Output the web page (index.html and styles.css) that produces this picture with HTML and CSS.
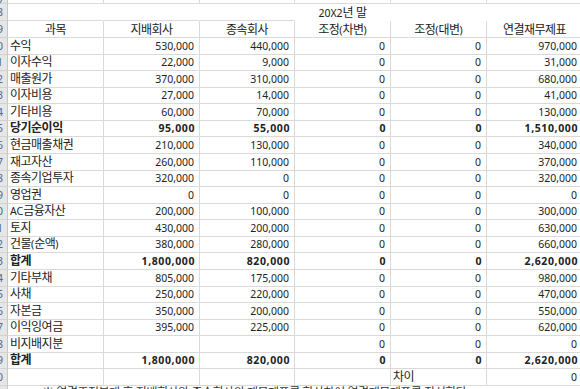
FILE: index.html
```html
<!DOCTYPE html>
<html lang="ko">
<head>
<meta charset="utf-8">
<title>연결재무제표 정산표</title>
<link rel="stylesheet" href="styles.css">
</head>
<body>
<div class="sheet">
  <div class="row h4"><div class="rh">7</div><div></div><div></div><div></div><div></div><div></div><div></div></div>
  <div class="row h17 band"><div class="rh">8</div><div class="ul"></div><div class="ul"></div><div class="ul"></div><div class="c"><span class="lat">20X2</span>년 말</div><div></div><div></div></div>
  <div class="row h17 head"><div class="rh">9</div><div class="c">과목</div><div class="c">지배회사</div><div class="c">종속회사</div><div class="c">조정<span class="lat">(</span>차변<span class="lat">)</span></div><div class="c">조정<span class="lat">(</span>대변<span class="lat">)</span></div><div class="c">연결재무제표</div></div>
  <div class="row h17"><div class="rh">10</div><div>수익</div><div class="num">530,000</div><div class="num">440,000</div><div class="num">0</div><div class="num">0</div><div class="num">970,000</div></div>
  <div class="row h16"><div class="rh">11</div><div>이자수익</div><div class="num">22,000</div><div class="num">9,000</div><div class="num">0</div><div class="num">0</div><div class="num">31,000</div></div>
  <div class="row h17"><div class="rh">12</div><div>매출원가</div><div class="num">370,000</div><div class="num">310,000</div><div class="num">0</div><div class="num">0</div><div class="num">680,000</div></div>
  <div class="row h16"><div class="rh">13</div><div>이자비용</div><div class="num">27,000</div><div class="num">14,000</div><div class="num">0</div><div class="num">0</div><div class="num">41,000</div></div>
  <div class="row h17"><div class="rh">14</div><div>기타비용</div><div class="num">60,000</div><div class="num">70,000</div><div class="num">0</div><div class="num">0</div><div class="num">130,000</div></div>
  <div class="row h16 b"><div class="rh">15</div><div>당기순이익</div><div class="num">95,000</div><div class="num">55,000</div><div class="num">0</div><div class="num">0</div><div class="num">1,510,000</div></div>
  <div class="row h17"><div class="rh">16</div><div>현금매출채권</div><div class="num">210,000</div><div class="num">130,000</div><div class="num">0</div><div class="num">0</div><div class="num">340,000</div></div>
  <div class="row h17"><div class="rh">17</div><div>재고자산</div><div class="num">260,000</div><div class="num">110,000</div><div class="num">0</div><div class="num">0</div><div class="num">370,000</div></div>
  <div class="row h16"><div class="rh">18</div><div>종속기업투자</div><div class="num">320,000</div><div class="num">0</div><div class="num">0</div><div class="num">0</div><div class="num">320,000</div></div>
  <div class="row h17"><div class="rh">19</div><div>영업권</div><div class="num">0</div><div class="num">0</div><div class="num">0</div><div class="num">0</div><div class="num">0</div></div>
  <div class="row h16"><div class="rh">20</div><div><span class="lat">AC</span>금융자산</div><div class="num">200,000</div><div class="num">100,000</div><div class="num">0</div><div class="num">0</div><div class="num">300,000</div></div>
  <div class="row h17"><div class="rh">21</div><div>토지</div><div class="num">430,000</div><div class="num">200,000</div><div class="num">0</div><div class="num">0</div><div class="num">630,000</div></div>
  <div class="row h16"><div class="rh">22</div><div>건물<span class="lat">(</span>순액<span class="lat">)</span></div><div class="num">380,000</div><div class="num">280,000</div><div class="num">0</div><div class="num">0</div><div class="num">660,000</div></div>
  <div class="row h17 b"><div class="rh">23</div><div>합계</div><div class="num">1,800,000</div><div class="num">820,000</div><div class="num">0</div><div class="num">0</div><div class="num">2,620,000</div></div>
  <div class="row h17"><div class="rh">24</div><div>기타부채</div><div class="num">805,000</div><div class="num">175,000</div><div class="num">0</div><div class="num">0</div><div class="num">980,000</div></div>
  <div class="row h16"><div class="rh">25</div><div>사채</div><div class="num">250,000</div><div class="num">220,000</div><div class="num">0</div><div class="num">0</div><div class="num">470,000</div></div>
  <div class="row h17"><div class="rh">26</div><div>자본금</div><div class="num">350,000</div><div class="num">200,000</div><div class="num">0</div><div class="num">0</div><div class="num">550,000</div></div>
  <div class="row h16"><div class="rh">27</div><div>이익잉여금</div><div class="num">395,000</div><div class="num">225,000</div><div class="num">0</div><div class="num">0</div><div class="num">620,000</div></div>
  <div class="row h17"><div class="rh">28</div><div>비지배지분</div><div class="num"></div><div class="num"></div><div class="num">0</div><div class="num">0</div><div class="num">0</div></div>
  <div class="row h16 b"><div class="rh">29</div><div>합계</div><div class="num">1,800,000</div><div class="num">820,000</div><div class="num">0</div><div class="num">0</div><div class="num">2,620,000</div></div>
  <div class="row h17"><div class="rh">30</div><div></div><div></div><div></div><div></div><div>차이</div><div class="num">0</div></div>
  <div class="row h20"><div class="rh">31</div><div class="note">※ 연결조정분개 후 지배회사와 종속회사의 재무제표를 합산하여 연결재무제표를 작성한다.</div></div>
</div>
</body>
</html>
```

FILE: styles.css
```css
html, body {
  margin: 0;
  background: #ffffff;
  overflow: hidden;
}

.sheet {
  width: 583px;
  font-family: "Noto Sans CJK KR", sans-serif;
  font-size: 12px;
  letter-spacing: -0.5px;
  color: #222222;
}

.row {
  display: grid;
  grid-template-columns: 8px 96px 96px 95px 96px 96px 96px;
}

.h4 { height: 4px; }
.h16 { height: 16px; }
.h17 { height: 17px; }
.h20 { height: 20px; }

.row > div {
  box-sizing: border-box;
  border-right: 1px solid #dadada;
  border-bottom: 1px solid #dadada;
  overflow: hidden;
  white-space: nowrap;
  line-height: 12px;
  padding: 0 2px;
}

.h17 > div { padding-top: 1px; }
.band > .c { padding-top: 2px; }
.head > .c { padding-top: 2px; }

.row > .rh {
  display: flex;
  justify-content: flex-end;
  background: #e6e6e6;
  border-right-color: #c6c6c6;
  border-bottom-color: #d2d2d2;
  padding: 0 4px 0 0;
  font-family: "Noto Sans", sans-serif;
  font-size: 11px;
  letter-spacing: 0;
  line-height: 14px;
  color: #4d6a94;
}

.h17 > .rh { padding-top: 1px; }

.h4 > .rh { line-height: 4px; }

.band > div { border-right-color: transparent; border-bottom-color: transparent; }
.band > .rh { border-right-color: #c6c6c6; border-bottom-color: #d2d2d2; }
.band > .ul { border-bottom-color: #dadada; }

.c { text-align: center; }

.lat {
  font-family: "Noto Sans", sans-serif;
  font-size: 10.5px;
  letter-spacing: 0;
}

.row > .num {
  text-align: right;
  padding-right: 5px;
  font-family: "Noto Sans", sans-serif;
  font-size: 10.5px;
  letter-spacing: 0;
  line-height: 14px;
}

.b > div { font-weight: 700; }
.b > .rh { font-weight: 400; }
.b > .num {
  letter-spacing: 0.6px;
  padding-right: 4px;
}

.h20 > .note {
  grid-column: 2 / span 6;
  border: none;
  padding: 0 2px 0 34px;
  color: #333333;
}
```
